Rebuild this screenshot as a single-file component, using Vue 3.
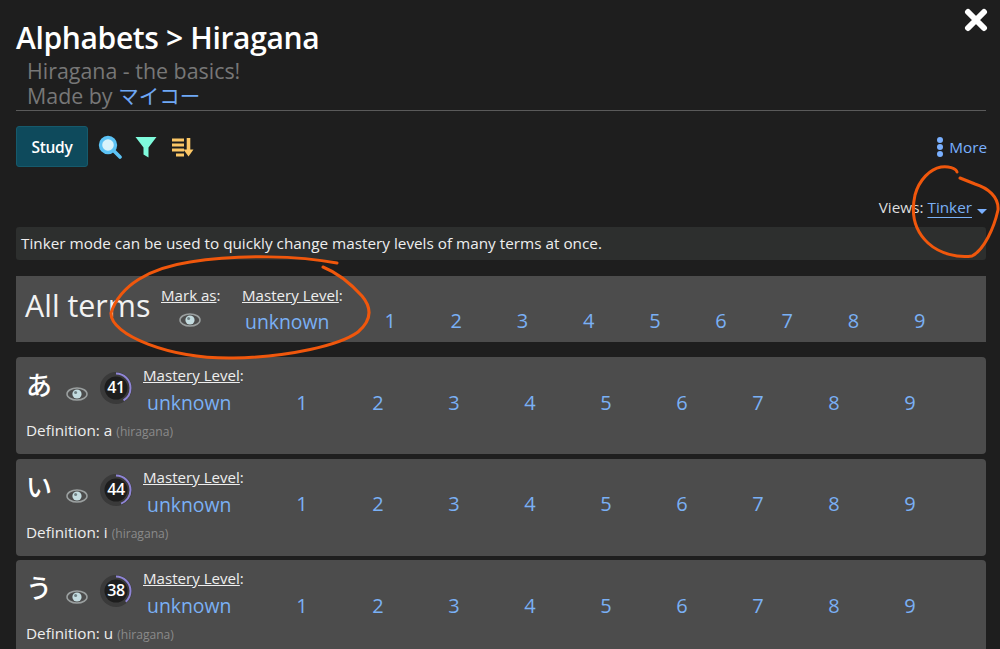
<script setup>
const levels = [1, 2, 3, 4, 5, 6, 7, 8, 9]
const terms = [
  { glyph: 'あ', score: 41, def: 'a' },
  { glyph: 'い', score: 44, def: 'i' },
  { glyph: 'う', score: 38, def: 'u' }
]
const circ = 2 * Math.PI * 14.5
const dash = (s) => `${(s / 100) * circ} ${circ}`
</script>

<template>
  <div class="page">
    <header class="head">
      <div class="title-row">
        <h1>Alphabets &gt; Hiragana</h1>
        <svg class="close" viewBox="0 0 24 24" width="24" height="24">
          <path d="M4 4 L20 20 M20 4 L4 20" stroke="#fff" stroke-width="6" stroke-linecap="round" />
        </svg>
      </div>
      <div class="sub">Hiragana - the basics!</div>
      <div class="sub">Made by <a class="jp">マイコー</a></div>
    </header>

    <div class="toolbar">
      <button class="study">Study</button>
      <svg viewBox="0 0 24 24" width="24" height="24">
        <circle cx="10" cy="10" r="7.5" fill="#d8f3fb" stroke="#5cc3f5" stroke-width="3.4" />
        <path d="M15.5 15.5 L22 22" stroke="#5cc3f5" stroke-width="3.6" stroke-linecap="round" />
      </svg>
      <svg class="funnel" viewBox="0 0 24 24" width="24" height="24">
        <path d="M1.5 2 H22.5 L14.5 12.5 V22.5 L9.5 19.5 V12.5 Z" fill="#7ffbdc" />
      </svg>
      <svg class="funnel" viewBox="0 0 24 24" width="24" height="24">
        <path d="M2 5 H14 M2 10 H14 M2 15 H14 M6 20 H14" stroke="#fcc766" stroke-width="2.8" />
        <path d="M18.5 3 V15" stroke="#fcc766" stroke-width="3.6" />
        <path d="M13.5 14.5 H23.5 L18.5 21.5 Z" fill="#fcc766" />
      </svg>
      <a class="more">
        <svg viewBox="0 0 8 20" width="8" height="20">
          <circle cx="4" cy="3" r="3" fill="#7ab0ff" />
          <circle cx="4" cy="10" r="3" fill="#7ab0ff" />
          <circle cx="4" cy="17" r="3" fill="#7ab0ff" />
        </svg>
        More
      </a>
    </div>

    <div class="views">
      Views: <a class="tinker">Tinker</a>
      <span class="caret"></span>
    </div>

    <div class="info">Tinker mode can be used to quickly change mastery levels of many terms at once.</div>

    <section class="all">
      <div class="all-title">All terms</div>
      <div class="mark">
        <div class="lab"><u>Mark as</u>:</div>
        <svg class="eye" viewBox="0 0 22 14" width="22" height="14">
          <ellipse cx="11" cy="7" rx="10" ry="6" fill="none" stroke="#9a9f9f" stroke-width="1.5" />
          <circle cx="11" cy="7" r="4.6" fill="#c4dce0" />
          <circle cx="9.6" cy="5.6" r="1.5" fill="#6f7f82" />
        </svg>
      </div>
      <div class="mastery">
        <div class="lab"><u>Mastery Level</u>:</div>
        <div class="lv-row">
          <a class="unk">unknown</a>
        </div>
      </div>
      <div class="nums wide">
        <a v-for="n in levels" :key="n" class="num">{{ n }}</a>
      </div>
    </section>

    <article v-for="t in terms" :key="t.glyph" class="card">
      <div class="card-top">
        <div class="glyph">{{ t.glyph }}</div>
        <svg class="eye card-eye" viewBox="0 0 22 14" width="22" height="14">
          <ellipse cx="11" cy="7" rx="10" ry="6" fill="none" stroke="#9a9f9f" stroke-width="1.5" />
          <circle cx="11" cy="7" r="4.6" fill="#c4dce0" />
          <circle cx="9.6" cy="5.6" r="1.5" fill="#6f7f82" />
        </svg>
        <div class="ring">
          <svg viewBox="0 0 34 34" width="34" height="34">
            <circle cx="17" cy="17" r="16" fill="#3a3a3a" />
            <circle cx="17" cy="17" r="11.5" fill="#1d1d1d" />
            <circle cx="17" cy="17" r="14.5" fill="none" stroke="#8f85d6" stroke-width="2"
              :stroke-dasharray="dash(t.score)" transform="rotate(-90 17 17)" />
          </svg>
          <span>{{ t.score }}</span>
        </div>
        <div class="card-mastery">
          <div class="lab"><u>Mastery Level</u>:</div>
          <div class="lv-row">
            <a class="unk card-unk">unknown</a>
            <div class="nums">
              <a v-for="n in levels" :key="n" class="num">{{ n }}</a>
            </div>
          </div>
        </div>
      </div>
      <div class="def">Definition: {{ t.def }} <small>(hiragana)</small></div>
    </article>

    <svg class="marks" viewBox="0 0 1000 649" width="1000" height="649" fill="none" stroke="#f0570c" stroke-width="3" stroke-linecap="round">
      <path d="M337 263 C300 256 240 254 190 262 C150 268 120 285 111 313 C110 335 170 359 233 358 C290 357 340 345 358 332 C372 320 372 308 362 296 C352 285 338 273 323 267" />
      <path d="M957 172 C956 168 948 166 941 167 C930 169 919 180 915 195 C911 213 914 230 928 243 C940 254 958 258 972 256 C984 250 994 228 998 210 C999 197 988 188 975 184 C970 182 965 180 960 178" />
    </svg>
  </div>
</template>

<style>
html, body { margin: 0; background: #1e1e1e; overflow: hidden; }
</style>

<style scoped>
.page {
  position: relative;
  box-sizing: border-box;
  width: 1000px;
  height: 649px;
  overflow: hidden;
  background: #1e1e1e;
  color: #eee;
  font-family: "Open Sans", "Noto Sans CJK JP", sans-serif;
  padding: 18px 14px 0 16px;
}
a { color: #7ab0f5; }
.head { border-bottom: 1px solid #5a5a5a; padding-bottom: 2px; }
.title-row { display: flex; justify-content: space-between; height: 40px; }
h1 {
  margin: 0;
  font-size: 30px;
  line-height: 40px;
  font-weight: 600;
  color: #fff;
  letter-spacing: -0.35px;
}
.close { margin: -10px -2px 0 0; }
.sub {
  height: 25px;
  font-size: 21.4px;
  line-height: 25px;
  color: #777;
  padding-left: 11px;
}
.jp { color: #6fa8f5; font-size: 20.5px; }
.toolbar {
  display: flex;
  align-items: center;
  gap: 11px;
  margin-top: 15px;
  height: 41px;
}
.funnel { margin-left: 1px; }
.study {
  width: 72px;
  height: 41px;
  margin-right: -1px;
  background: #0e4a5c;
  border: 1px solid #165a6c;
  border-radius: 3px;
  color: #fff;
  font: 600 15.5px "Open Sans", sans-serif;
  letter-spacing: -0.3px;
  padding: 0;
}
.more {
  margin-left: auto;
  display: flex;
  align-items: center;
  gap: 5px;
  font-size: 15.3px;
  color: #7ab0ff;
  margin-right: -1px;
}
.more svg { margin-left: 1px; }
.views {
  margin-top: 29px;
  height: 22px;
  line-height: 22px;
  font-size: 15.3px;
  text-align: right;
  color: #ddd;
  margin-right: -1px;
}
.tinker { text-decoration: underline; text-underline-offset: 4px; }
.caret {
  display: inline-block;
  width: 0;
  height: 0;
  margin-left: 5px;
  border: 5px solid transparent;
  border-top: 5px solid #7ab0ff;
  border-bottom: 0;
  vertical-align: -1px;
}
.info {
  margin-top: 9px;
  height: 33px;
  line-height: 33px;
  padding-left: 5px;
  font-size: 15.3px;
  background: #2d2f2e;
  border-radius: 3px;
  color: #eee;
}
.all {
  display: flex;
  align-items: stretch;
  margin-top: 16px;
  height: 66px;
  background: #4c4c4c;
}
.all-title {
  width: 145px;
  padding-left: 9px;
  font-size: 30.4px;
  line-height: 60px;
  color: #f2f2f2;
  box-sizing: border-box;
}
.lab { font-size: 15.1px; line-height: 20px; color: #eee; }
.mark { width: 81px; padding-top: 9px; }
.mark .eye { display: block; margin: 8px 0 0 18px; }
.mastery { width: 115px; padding-top: 9px; }
.mastery .unk { margin-left: 3px; margin-top: 3px; }
.lv-row { display: flex; align-items: center; }
.unk { font-size: 19.4px; line-height: 28px; display: block; }
.nums { display: flex; }
.num { font-size: 20px; line-height: 28px; width: 76px; text-align: center; }
.nums.wide { padding-top: 31px; }
.nums.wide .num { width: 66.2px; }
.card {
  box-sizing: border-box;
  height: 97px;
  margin-top: 4.6px;
  padding: 0 0 0 10px;
  background: #4c4c4c;
  border-radius: 4px;
}
.all + .card { margin-top: 15px; }
.card-top { display: flex; align-items: flex-start; height: 66px; }
.glyph { width: 40px; font-size: 26px; line-height: 38px; padding-top: 8px; color: #fff; font-weight: 500; font-family: "Noto Sans CJK JP", sans-serif; }
.card-eye { margin-top: 30px; }
.ring {
  position: relative;
  width: 34px;
  height: 34px;
  margin: 14px 10px 0 11px;
  flex: none;
}
.ring svg { display: block; }
.ring span {
  position: absolute;
  inset: 0;
  text-align: center;
  line-height: 32px;
  font-size: 16px;
  font-weight: 600;
  letter-spacing: -0.3px;
  color: #fff;
}
.card-mastery { padding-top: 8px; margin-left: 1px; }
.card-mastery .lab { margin-left: -1px; }
.card-mastery .lv-row { margin-top: 3px; }
.card-unk { margin-left: 3px; margin-top: 1px; width: 117px; flex: none; }
.def { font-size: 15.3px; line-height: 20px; color: #eee; margin-top: -3px; }
.def small { font-size: 12.1px; color: #8a8a8a; }
.marks { position: absolute; left: 0; top: 0; pointer-events: none; }
</style>
